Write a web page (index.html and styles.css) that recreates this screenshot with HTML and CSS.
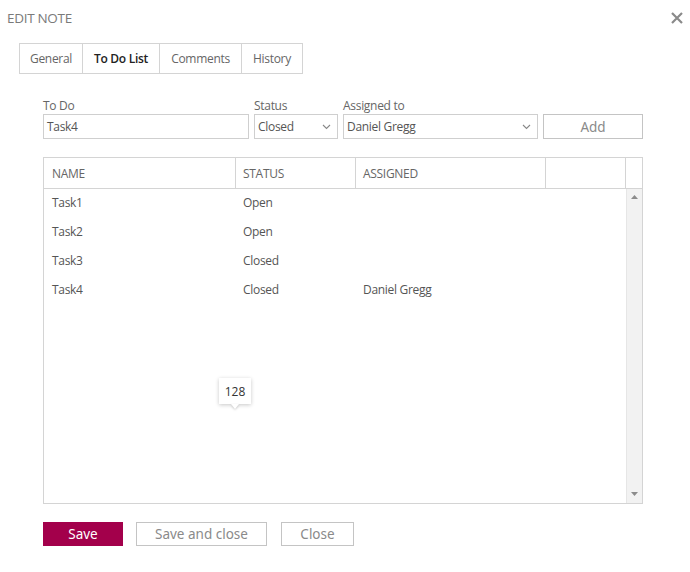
FILE: index.html
```html
<!DOCTYPE html>
<html>
<head>
<meta charset="utf-8">
<link rel="stylesheet" href="styles.css">
</head>
<body>
<div class="dialog">
  <div class="header">
    <div class="title">EDIT NOTE</div>
    <svg class="close-x" width="14" height="14" viewBox="0 0 14 14"><path d="M2 2 L12 12 M12 2 L2 12" stroke="#8a8a8a" stroke-width="2.2" fill="none"/></svg>
  </div>
  <div class="tabs">
    <div class="tab">General</div>
    <div class="tab active">To Do List</div>
    <div class="tab">Comments</div>
    <div class="tab">History</div>
  </div>
  <div class="content">
    <div class="form">
      <label class="lbl">To Do</label>
      <label class="lbl">Status</label>
      <label class="lbl">Assigned to</label>
      <span></span>
      <div class="input">Task4</div>
      <div class="input select">Closed<svg class="chev" width="9" height="6" viewBox="0 0 9 6"><path d="M1 1 L4.5 4.5 L8 1" stroke="#888" stroke-width="1.1" fill="none"/></svg></div>
      <div class="input select">Daniel Gregg<svg class="chev" width="9" height="6" viewBox="0 0 9 6"><path d="M1 1 L4.5 4.5 L8 1" stroke="#888" stroke-width="1.1" fill="none"/></svg></div>
      <div class="btn add">Add</div>
    </div>
    <div class="grid">
      <div class="grid-head">
        <div class="c c1">NAME</div>
        <div class="c c2">STATUS</div>
        <div class="c c3">ASSIGNED</div>
        <div class="c c4"></div>
        <div class="c c5"></div>
      </div>
      <div class="grid-body">
        <div class="rows">
          <div class="row"><div class="c c1">Task1</div><div class="c c2">Open</div><div class="c c3"></div></div>
          <div class="row"><div class="c c1">Task2</div><div class="c c2">Open</div><div class="c c3"></div></div>
          <div class="row"><div class="c c1">Task3</div><div class="c c2">Closed</div><div class="c c3"></div></div>
          <div class="row"><div class="c c1">Task4</div><div class="c c2">Closed</div><div class="c c3">Daniel Gregg</div></div>
          <div class="tooltip">128</div>
        </div>
        <div class="scrollbar">
          <svg width="7" height="4" viewBox="0 0 7 4"><path d="M0 4 L3.5 0 L7 4 Z" fill="#8c8c8c"/></svg>
          <svg width="7" height="4" viewBox="0 0 7 4"><path d="M0 0 L3.5 4 L7 0 Z" fill="#8c8c8c"/></svg>
        </div>
      </div>
    </div>
    <div class="actions">
      <div class="btn primary">Save</div>
      <div class="btn wide">Save and close</div>
      <div class="btn close">Close</div>
    </div>
  </div>
</div>
</body>
</html>
```
FILE: styles.css
```css
html, body {
  margin: 0;
  padding: 0;
  background: #fff;
}
body {
  font-family: "Open Sans", "Noto Sans", sans-serif;
  font-size: 12px;
  color: #555;
}
.dialog {
  width: 690px;
  height: 572px;
  box-sizing: border-box;
  padding: 9px 0 0 0;
}
.header {
  display: flex;
  justify-content: space-between;
  align-items: center;
  padding: 0 6px 0 7px;
  height: 17px;
}
.title {
  font-size: 13.5px;
  color: #7a7a7a;
  letter-spacing: -0.3px;
}
.tabs {
  display: flex;
  margin: 17px 0 0 19px;
  width: fit-content;
  border: 1px solid #d4d4d4;
  height: 29px;
}
.tab {
  display: flex;
  align-items: center;
  justify-content: center;
  color: #666;
  font-size: 12px;
  letter-spacing: -0.3px;
  border-left: 1px solid #d4d4d4;
}
.tab:first-child { border-left: none; width: 62px; }
.tab:nth-child(2) { width: 76px; }
.tab:nth-child(3) { width: 81px; }
.tab:nth-child(4) { width: 60px; }
.tab.active {
  color: #222;
  font-weight: 600;
}
.content {
  margin-left: 43px;
  width: 600px;
}
.form {
  display: grid;
  grid-template-columns: 206px 84px 195px 100px;
  column-gap: 5px;
  margin-top: 24px;
}
.lbl {
  font-size: 12px;
  color: #666;
  letter-spacing: -0.3px;
  height: 16px;
  line-height: 15px;
}
.input {
  height: 25px;
  box-sizing: border-box;
  border: 1px solid #cfcfcf;
  display: flex;
  align-items: center;
  padding: 0 4px 1px 3px;
  color: #555;
  letter-spacing: -0.3px;
}
.select {
  justify-content: space-between;
  padding-right: 6px;
}
.chev { margin-top: 2px; }
.btn {
  box-sizing: border-box;
  border: 1px solid #c4c4c4;
  display: flex;
  align-items: center;
  justify-content: center;
  font-family: "Noto Sans", "Open Sans", sans-serif;
  font-size: 13.5px;
  color: #8a8a8a;
}
.add {
  height: 25px;
}
.grid {
  margin-top: 18px;
  width: 600px;
  height: 347px;
  box-sizing: border-box;
  border: 1px solid #d4d4d4;
  display: flex;
  flex-direction: column;
}
.grid-head {
  display: flex;
  height: 30px;
  border-bottom: 1px solid #d4d4d4;
  flex: none;
}
.grid-head .c {
  border-right: 1px solid #d4d4d4;
  display: flex;
  align-items: center;
  color: #666;
  letter-spacing: -0.3px;
}
.c { box-sizing: border-box; padding-left: 8px; }
.c1 { width: 192px; }
.c2 { width: 120px; padding-left: 7px; }
.c3 { width: 190px; padding-left: 7px; }
.c4 { width: 80px; }
.grid-head .c5 { flex: 1; border-right: none; }
.grid-body {
  flex: 1;
  display: flex;
}
.rows {
  flex: 1;
  position: relative;
}
.row {
  display: flex;
  height: 29px;
  align-items: center;
  padding-bottom: 2px;
  box-sizing: border-box;
  color: #555;
  letter-spacing: -0.3px;
}
.row + .row { height: 29px; }
.scrollbar {
  width: 16px;
  background: #f2f2f2;
  border-left: 1px solid #e6e6e6;
  display: flex;
  flex-direction: column;
  justify-content: space-between;
  align-items: center;
  padding: 6px 0 7px;
  box-sizing: border-box;
}
.tooltip {
  position: absolute;
  left: 175px;
  top: 189px;
  width: 32px;
  height: 26px;
  box-sizing: border-box;
  background: #fff;
  box-shadow: 0 1px 4px rgba(0,0,0,0.22);
  display: flex;
  align-items: center;
  justify-content: center;
  color: #333;
  font-size: 12px;
}
.tooltip::after {
  content: "";
  position: absolute;
  left: 12px;
  bottom: -5px;
  border-left: 4px solid transparent;
  border-right: 4px solid transparent;
  border-top: 5px solid #fff;
  filter: drop-shadow(0 1px 1px rgba(0,0,0,0.2));
}
.actions {
  display: flex;
  margin-top: 18px;
  height: 24px;
}
.actions .btn { height: 24px; }
.primary {
  width: 80px;
  background: #a3004b;
  border-color: #a3004b;
  color: #fff;
}
.wide {
  width: 131px;
  margin-left: 13px;
}
.close {
  width: 73px;
  margin-left: 14px;
}
```
